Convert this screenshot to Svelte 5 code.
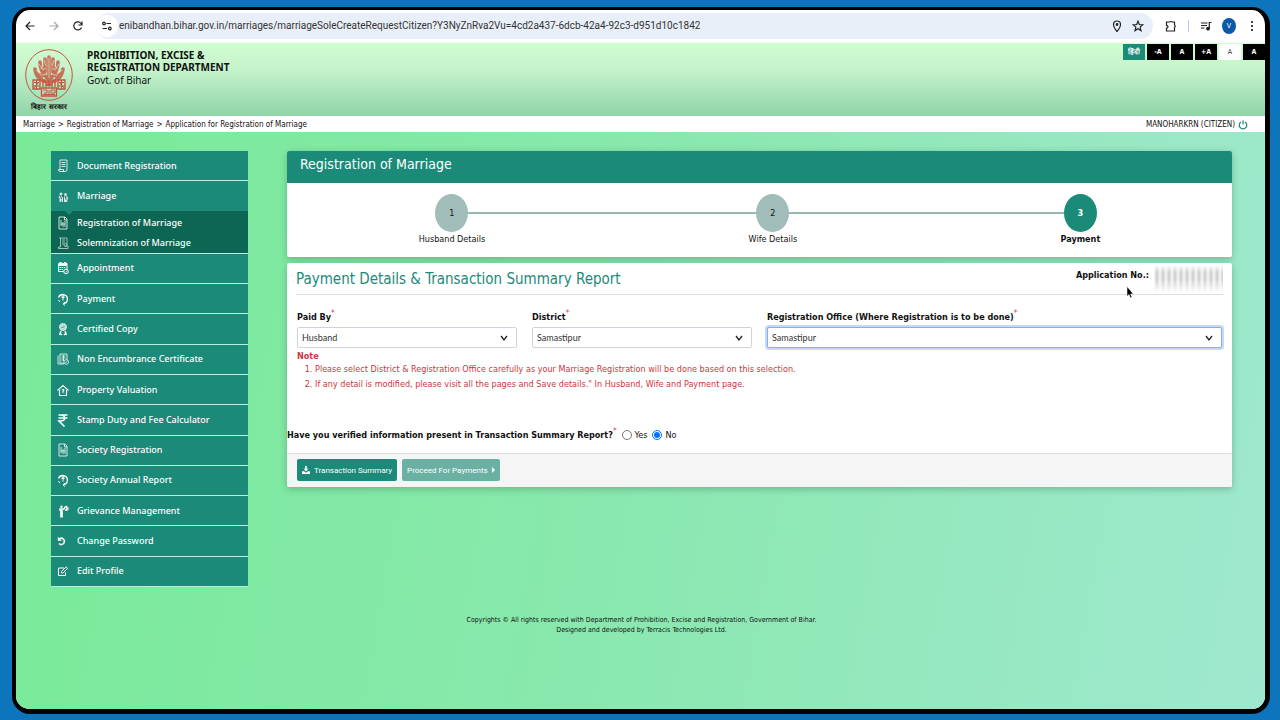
<script lang="ts">
  interface MenuItem {
    label: string;
    icon: string;
    children?: MenuItem[];
  }

  const menu: MenuItem[] = [
    { label: "Document Registration", icon: "doc" },
    {
      label: "Marriage",
      icon: "couple",
      children: [
        { label: "Registration of Marriage", icon: "form" },
        { label: "Solemnization of Marriage", icon: "scroll" }
      ]
    },
    { label: "Appointment", icon: "calendar" },
    { label: "Payment", icon: "pay" },
    { label: "Certified Copy", icon: "badge" },
    { label: "Non Encumbrance Certificate", icon: "papers" },
    { label: "Property Valuation", icon: "house" },
    { label: "Stamp Duty and Fee Calculator", icon: "rupee" },
    { label: "Society Registration", icon: "form" },
    { label: "Society Annual Report", icon: "pay" },
    { label: "Grievance Management", icon: "person" },
    { label: "Change Password", icon: "undo" },
    { label: "Edit Profile", icon: "edit" }
  ];

  const steps = ["Husband Details", "Wife Details", "Payment"];
  const crumbs = ["Marriage", "Registration of Marriage", "Application for Registration of Marriage"];

  let paidBy = "Husband";
  let district = "Samastipur";
  let office = "Samastipur";
  let verified = "no";
  let current = 2;
</script>

{#snippet icon(name: string)}
  <svg class="icon" viewBox="0 0 12 14" fill="none" stroke="currentColor" aria-hidden="true">
    {#if name === "doc"}
      <path opacity=".8" d="M3 1h7v9.500q0 2-2 2H3q-1.500 0-1.500-2h5v2M3 1v9M4.500 3.500h4M4.500 5.500h4M4.500 7.500h4" />
    {:else if name === "couple"}
      <g fill="currentColor" stroke="none" opacity=".8"><circle cx="4" cy="5" r="1.500" /><circle cx="8.500" cy="5.500" r="1.500" /><path d="M2 7h3.500l.5 1v5H4.800v-3l-.8 3H2.500V9L1.500 8.500zM7 7.500h3.500l.8 2.500-1 .5v2.500H7z" /></g>
      <path stroke="#223" stroke-width=".8" d="M3.500 7l1 3M8.500 7.500l.5 3M5.800 6v2" />
    {:else if name === "form"}
      <g opacity=".8"><path d="M2 1h6l2 2v10H2z" /><path d="M4 4v6M6 6v5M4 8h4M8 5v6M7.500 1v3H10" /></g>
    {:else if name === "scroll"}
      <g opacity=".6"><path d="M2 2h8v7M3.500 2v9H1.500v1.500H11V10H8M5 4h3M5 6h3M5 8h2" /><circle cx="8.500" cy="9" r="1.500" /></g>
    {:else if name === "calendar"}
      <path d="M1.500 2.500h8.500v8H1.500z" /><path stroke-width="2" d="M2 4h8M3.500 1v2M8 1v2" /><path stroke-dasharray="1.500 .6" d="M2.500 6.500h6M2.500 8.500h4" /><circle cx="9" cy="10.500" r="2.300" fill="#1b8a78" /><path d="M8 10.500l.8.800 1.400-1.500" stroke-width=".8" />
    {:else if name === "pay"}
      <path stroke-width="1.300" d="M1.500 5.500a4.600 4.600 0 1 1 5 6.200" /><path d="M8 10l-2 1.800L8 13.500M6 3.500v5M4.500 4h3M4.500 5.500h3M1.500 8q.5 1 1.500 2" />
    {:else if name === "badge"}
      <circle cx="6" cy="5" r="3.500" fill="currentColor" fill-opacity=".7" stroke-dasharray="1.400 .5" /><path stroke="#1b8a78" stroke-width=".8" d="M4.500 5l1 1 2-2" /><path stroke-width="1.400" d="M4 9l-1.500 4M3 11l2 2M8 9l1.500 4M9 11l-2 2" />
    {:else if name === "papers"}
      <g opacity=".8"><path d="M3 2h7v6M3 2v9h4M1 3.500v8.500h6M4.500 4h4M4.500 6h4M4.500 8h2M6.500 3v6" /><circle cx="9.200" cy="10" r="2.300" fill="#1b8a78" /><path d="M8 10l.8.800L10.200 9" stroke-width=".8" /></g>
    {:else if name === "house"}
      <path stroke-width="1.100" d="M.5 7.500L6 2.500l5.500 5M2.500 7v5.500h7V7" /><path d="M4.800 6.500h2.500M4.800 8h2.500M6 6.500q2 1.500-.5 2.500l1.500 1.500" stroke-width=".8" />
    {:else if name === "rupee"}
      <path stroke-width="1.600" d="M1.500 2h9M1.500 5h9M3.500 2c5.500 0 5.500 6 0 6H2l5.500 5.500" />
    {:else if name === "person"}
      <path stroke-width="2.600" d="M4.500 6v7.500" /><circle cx="4.500" cy="2.800" r="1.200" fill="currentColor" stroke="none" /><path stroke-width="1.400" d="M3 7V5h4l1-2 1.500-.5L10 6H8" /><path d="M11 3v3" />
    {:else if name === "undo"}
      <path stroke-width="1.500" d="M2.500 4.800A3.100 3.100 0 1 1 2 9.500" /><path fill="currentColor" stroke="none" d="M.8 2.800v4h4z" />
    {:else}
      <path d="M7 4H1.500v7.500H8.500V8.500M4.500 9V7.500L9.200 2.800l1.400 1.400L6 9z" />
    {/if}
  </svg>
{/snippet}

<div class="desktop">
  <div class="browser">
    <div class="toolbar">
      <div class="history">
        <button class="tool" aria-label="Back">
          <svg viewBox="0 0 12 12"><path d="M10.500 6H2M6 2L2 6l4 4" /></svg>
        </button>
        <button class="tool faded" aria-label="Forward">
          <svg viewBox="0 0 12 12"><path d="M1.500 6H10M6 2l4 4-4 4" /></svg>
        </button>
        <button class="tool" aria-label="Reload">
          <svg viewBox="0 0 12 12"><path d="M9.500 7.500A4 4 0 1 1 9 3.500L10 5M10 1.500V5H6.500" /></svg>
        </button>
      </div>
      <div class="address">
        <button class="site-info" aria-label="Site information">
          <svg viewBox="0 0 12 12"><circle cx="3" cy="3.500" r="1.300" /><path d="M5.500 3.500H10M1.500 8.500H6" /><circle cx="8.800" cy="8.500" r="1.300" /></svg>
        </button>
        <input
          class="url"
          aria-label="Address"
          value="enibandhan.bihar.gov.in/marriages/marriageSoleCreateRequestCitizen?Y3NyZnRva2Vu=4cd2a437-6dcb-42a4-92c3-d951d10c1842"
        />
        <button class="tool" aria-label="Location">
          <svg viewBox="0 0 12 12"><path d="M6 11.500C3.500 8.500 2.500 6.500 2.500 4.500a3.500 3.500 0 0 1 7 0c0 2-1 4-3.500 7z" /><circle cx="6" cy="4.500" r=".8" class="solid" /></svg>
        </button>
        <button class="tool" aria-label="Bookmark">
          <svg viewBox="0 0 12 12"><path d="M6 1.200l1.300 3.300 3.500.3-2.700 2.300.9 3.500L6 8.700l-3 1.900.9-3.500L1.200 4.800l3.500-.3z" /></svg>
        </button>
      </div>
      <div class="extras">
        <button class="tool" aria-label="Extensions">
          <svg viewBox="0 0 12 12"><path d="M1.500 2h3.300a1.200 .8 0 0 1 2.200 0h2.500v3a1 1.200 0 0 1 0 2.300v3.700h-8V8q1.500 0 1.500-1.300T1.500 5.300z" /></svg>
        </button>
        <span class="divider"></span>
        <button class="tool" aria-label="Media">
          <svg viewBox="0 0 12 12"><path d="M1 3h6.500M1 5.500h6M1 8h3.500M9.300 8.500V2.500h2.200" /><circle cx="8" cy="8.700" r="1.300" class="solid" /></svg>
        </button>
        <button class="profile">V</button>
        <button class="tool" aria-label="Menu">
          <svg viewBox="0 0 12 12"><circle cx="6" cy="2" r=".5" class="solid" /><circle cx="6" cy="6" r=".5" class="solid" /><circle cx="6" cy="10" r=".5" class="solid" /></svg>
        </button>
      </div>
    </div>

    <header class="banner">
      <div class="logo">
        <svg class="emblem" viewBox="0 0 48 52" fill="none" stroke="#c4543f" aria-hidden="true">
          <ellipse cx="24" cy="26" rx="23.300" ry="25.300" />
          <g stroke-width="3.600" stroke-linecap="round" stroke-opacity=".8">
            <path d="M24 36V8M23 33C16 32 11 28 10 20M25 33c7-1 12-5 13-13M22 29c-4-4-7-9-7-16M26 29c4-4 7-9 7-16M20 23V10M28 23V10M17 27l-6-3M31 27l6-3" />
          </g>
          <g stroke="#f0d9c0" stroke-width=".7">
            <path d="M24 9v20M19 11l2 6M29 11l-2 6M14 15l4 6M34 15l-4 6M11 21l6 6M37 21l-6 6M21 19l-3 2M27 19l3 2M22 25l-5 1M26 25l5 1M16 20l2-4M32 20l-2-4" />
          </g>
          <path d="M18 38v-7l3 2v5M27 38v-5l3-2v7M21 36h6M24 31v6" stroke-width="1.300" />
          <path d="M8 31h7v9H8zM33 31h7v9h-7zM16.500 39h15v8h-15z" stroke-width="1.300" />
          <path d="M9 33.500h5M11.500 31v9M8 37h7M9 39l5-6M34 33.500h5M33 37h7M36.500 31v9M34 33l5 6" />
          <path d="M18 41h4v3h-3M24 41v4M26 41h4v3h-4zM18 45.500h12" />
        </svg>
        <span class="logo-text">बिहार सरकार</span>
      </div>
      <div class="dept">
        <strong>PROHIBITION, EXCISE &amp;<br />REGISTRATION DEPARTMENT</strong>
        <span>Govt. of Bihar</span>
      </div>
      <div class="access">
        <button class="hindi">हिंदी</button>
        <button>-A</button>
        <button>A</button>
        <button>+A</button>
        <button class="light">A</button>
        <button>A</button>
      </div>
    </header>

    <div class="crumb-bar">
      <nav aria-label="Breadcrumb">
        {#each crumbs as crumb, i}
          {#if i > 0}<span>&gt;</span>{/if}
          <a href="#top">{crumb}</a>
        {/each}
      </nav>
      <div class="user">
        MANOHARKRN (CITIZEN)
        <button aria-label="Log out">
          <svg viewBox="0 0 12 12"><path d="M3.500 2.500a4.500 4.500 0 1 0 5 0M6 .5v5" /></svg>
        </button>
      </div>
    </div>

    <div class="page">
      <div class="columns">
        <nav class="sidebar" aria-label="Main menu">
          {#each menu as item}
            <a href="#menu" class="item">{@render icon(item.icon)}{item.label}</a>
            {#if item.children}
              <div class="submenu">
                {#each item.children as child}
                  <a href="#menu">{@render icon(child.icon)}{child.label}</a>
                {/each}
              </div>
            {/if}
          {/each}
        </nav>

        <main>
          <section class="card">
            <h1>Registration of Marriage</h1>
            <ol class="steps">
              {#each steps as step, i}
                <li class:active={i === current}>
                  <button>{i + 1}</button>
                  {step}
                </li>
              {/each}
            </ol>
          </section>

          <section class="card">
            <div class="title-row">
              <h2>Payment Details &amp; Transaction Summary Report</h2>
              <div class="app-no">
                <b>Application No.:</b>
                <span class="masked"></span>
                <svg class="cursor" viewBox="0 0 8 13"><path d="M1 .5v9.800l2-1.800 1.500 3.500 1.500-.7-1.500-3.300h2.800z" /></svg>
              </div>
            </div>

            <div class="fields">
              <div class="field">
                <label for="paid-by">Paid By<sup>*</sup></label>
                <select id="paid-by" bind:value={paidBy}>
                  <option>Husband</option>
                  <option>Wife</option>
                </select>
              </div>
              <div class="field">
                <label for="district">District<sup>*</sup></label>
                <select id="district" bind:value={district}>
                  <option>Samastipur</option>
                </select>
              </div>
              <div class="field wide">
                <label for="office">Registration Office (Where Registration is to be done)<sup>*</sup></label>
                <select id="office" class="focused" bind:value={office}>
                  <option>Samastipur</option>
                </select>
              </div>
            </div>

            <div class="note">
              <b>Note</b>
              <ol>
                <li>Please select District &amp; Registration Office carefully as your Marriage Registration will be done based on this selection.</li>
                <li>If any detail is modified, please visit all the pages and Save details." In Husband, Wife and Payment page.</li>
              </ol>
            </div>

            <div class="verify" role="radiogroup" aria-labelledby="verify-label">
              <b id="verify-label">Have you verified information present in Transaction Summary Report?<sup>*</sup></b>
              <label><input type="radio" name="verified" value="yes" bind:group={verified} />Yes</label>
              <label><input type="radio" name="verified" value="no" bind:group={verified} />No</label>
            </div>

            <div class="actions">
              <button>
                <svg viewBox="0 0 10 10"><path d="M4 0h2v3.500h2L5 7 2 3.500h2zM0 6.500h2.500L5 8.500l2.500-2H10V10H0z" /></svg>
                Transaction Summary
              </button>
              <button disabled>
                Proceed For Payments
                <svg class="caret" viewBox="0 0 4 8"><path d="M0 0l4 4-4 4z" /></svg>
              </button>
            </div>
          </section>
        </main>
      </div>

      <footer>
        Copyrights © All rights reserved with Department of Prohibition, Excise and Registration, Government of Bihar.<br />
        Designed and developed by Terracis Technologies Ltd.
      </footer>
    </div>
  </div>
</div>

<style>
  .desktop {
    box-sizing: border-box;
    display: flex;
    min-height: 100vh;
    padding: 7px 10px 6px 12px;
    background: #0d75bb;
    font-family: "DejaVu Sans Condensed", "DejaVu Sans", sans-serif;
    font-size: 10px;
    line-height: 12px;
    color: #111;
  }
  .browser {
    flex: 1;
    display: flex;
    flex-direction: column;
    overflow: hidden;
    border: solid #000;
    border-width: 3px 5px 5px 4px;
    border-radius: 18px;
    background: #fff;
  }
  button {
    padding: 0;
    border: 0;
    background: none;
    font: inherit;
    color: inherit;
  }
  a {
    color: inherit;
    text-decoration: none;
  }
  h1, h2, ol {
    margin: 0;
    padding: 0;
    font-weight: normal;
  }
  sup {
    font-size: 8px;
    line-height: 0;
    color: #dc3545;
    font-weight: normal;
  }

  /* browser toolbar */
  .toolbar {
    display: flex;
    align-items: center;
    gap: 12px;
    height: 31px;
    padding: 0 7px 0 8px;
    border-bottom: 2px solid #fafcfa;
  }
  .history {
    display: flex;
    gap: 12px;
  }
  .extras {
    display: flex;
    align-items: center;
    gap: 10px;
  }
  .tool {
    display: flex;
  }
  .tool svg,
  .site-info svg {
    width: 12px;
    height: 12px;
    fill: none;
    stroke: #222;
    stroke-width: 1.2;
  }
  .tool .solid {
    fill: #222;
  }
  .faded {
    opacity: 0.4;
  }
  .address {
    flex: 1;
    display: flex;
    align-items: center;
    gap: 9px;
    height: 26px;
    padding: 0 9px 0 0;
    border-radius: 13px;
    background: #e8eff8;
  }
  .site-info {
    display: flex;
    margin-right: -8px;
    padding: 5px;
    border-radius: 50%;
    background: #fff;
  }
  .url {
    flex: 1;
    padding: 0;
    border: 0;
    background: none;
    font: 10px/14px Roboto, sans-serif;
    color: #333;
  }
  .divider {
    width: 1px;
    height: 12px;
    margin: 0 1px;
    background: #b3c8f3;
  }
  .profile {
    width: 14px;
    height: 16px;
    border-radius: 50%;
    background: #0b57a8;
    color: #fff;
    font-size: 7px;
  }

  /* department banner */
  .banner {
    display: flex;
    align-items: flex-start;
    height: 73px;
    padding-left: 9px;
    background: linear-gradient(#d0fdd0, #c6f3cc 35%, #8fd4a8);
  }
  .logo {
    width: 48px;
    margin: 6px 14px 0 0;
    text-align: center;
  }
  .emblem {
    display: block;
    width: 48px;
    height: 52px;
  }
  .logo-text {
    display: block;
    font-size: 7px;
    line-height: 12px;
    font-weight: bold;
    white-space: nowrap;
  }
  .dept {
    flex: 1;
    padding-top: 6px;
    font-family: "Noto Sans", sans-serif;
  }
  .dept strong,
  .dept span {
    display: block;
  }
  .dept span {
    margin-top: 1px;
  }
  .access {
    display: flex;
    gap: 2px;
    padding-top: 1px;
  }
  .access button {
    width: 22px;
    height: 16px;
    background: #000;
    color: #fff;
    font-size: 7px;
    font-weight: bold;
  }
  .access .hindi {
    background: #1b8a78;
  }
  .access .light {
    background: #fff;
    color: #333;
    font-weight: normal;
  }

  .crumb-bar {
    display: flex;
    justify-content: space-between;
    align-items: center;
    padding: 3px 17px 1px 7px;
    background: #fff;
    font-size: 8px;
  }
  .crumb-bar nav {
    display: flex;
    gap: 3px;
  }
  .user {
    display: flex;
    align-items: center;
    gap: 3px;
  }
  .user button {
    display: flex;
  }
  .user svg {
    width: 10px;
    height: 10px;
    fill: none;
    stroke: #1b8a78;
    stroke-width: 1.5;
  }

  /* page body */
  .page {
    flex: 1;
    padding: 19px 33px 20px 35px;
    background: linear-gradient(100deg, #78ea98, #88e8ac 45%, #9fe8cf);
  }
  .columns {
    display: flex;
    align-items: flex-start;
    gap: 39px;
  }
  .sidebar {
    display: flex;
    flex-direction: column;
    width: 197px;
    min-height: 436px;
    color: #fff;
    font-family: "Noto Sans", sans-serif;
    font-size: 9px;
    font-weight: 500;
  }
  .item {
    flex: 1;
    display: flex;
    align-items: center;
    min-height: 29px;
    background: #1b8a78;
    border-bottom: 1px solid #b5f0dc;
  }
  .icon {
    width: 12px;
    height: 14px;
    margin: 0 8px 0 6px;
  }
  .item:has(+ .submenu) {
    border-bottom: 0;
  }
  .submenu {
    position: relative;
    padding: 2px 0 0;
    background: #0d6553;
    border-bottom: 1px solid #b5f0dc;
  }
  .submenu::before {
    content: "";
    position: absolute;
    top: 0;
    left: 14px;
    border: 4px solid transparent;
    border-top-color: #1b8a78;
    border-bottom: 0;
  }
  .submenu a {
    display: flex;
    align-items: center;
    height: 20px;
  }

  main {
    flex: 1;
    min-width: 0;
  }
  .card {
    overflow: hidden;
    margin-bottom: 6px;
    border-radius: 2px;
    background: #fff;
    box-shadow: 0 2px 7px rgba(50, 110, 80, 0.4);
  }
  h1 {
    padding: 4px 13px 10px;
    background: #1b8a78;
    color: #fff;
    font-size: 14px;
    line-height: 18px;
  }
  .steps {
    position: relative;
    display: flex;
    justify-content: space-around;
    padding: 11px 0 12px;
    list-style: none;
  }
  .steps::before {
    content: "";
    position: absolute;
    top: 29px;
    left: 18%;
    right: 17%;
    height: 2px;
    background: #93bab5;
  }
  .steps li {
    position: relative;
    display: flex;
    flex-direction: column;
    align-items: center;
    gap: 1px;
    font-size: 9px;
  }
  .steps button {
    width: 33px;
    height: 38px;
    border-radius: 50%;
    background: #a0bdb9;
  }
  .steps .active {
    font-weight: bold;
  }
  .steps .active button {
    background: #1b8a78;
    color: #fff;
  }

  .title-row {
    display: flex;
    justify-content: space-between;
    margin: 0 9px;
    border-bottom: 1px solid #ddd;
  }
  h2 {
    padding: 6px 0 5px;
    color: #1b8a78;
    font-size: 15px;
    line-height: 20px;
  }
  .app-no {
    position: relative;
    display: flex;
    gap: 5px;
    padding-top: 6px;
    font-size: 9px;
  }
  .masked {
    width: 69px;
    height: 28px;
    margin-top: -4px;
    background:
      linear-gradient(#fff, transparent 25%, transparent 50%, #fff),
      repeating-linear-gradient(90deg, #f6f6f6, #ccc 3px, #f6f6f6 6px);
  }
  .cursor {
    position: absolute;
    top: 23px;
    left: 50px;
    width: 8px;
    height: 13px;
    stroke: #fff;
    stroke-width: 0.5;
  }
  .fields {
    display: grid;
    grid-template-columns: repeat(4, 1fr);
    gap: 15px;
    padding: 16px 10px 0;
  }
  .field label {
    display: block;
    margin-bottom: 4px;
    font-size: 9px;
    font-weight: bold;
  }
  .wide {
    grid-column: span 2;
  }
  select {
    appearance: none;
    display: block;
    width: 100%;
    height: 21px;
    padding: 0 4px;
    border: 1px solid #ced4da;
    border-radius: 2px;
    background: #fff
      url("data:image/svg+xml,%3Csvg xmlns='http://www.w3.org/2000/svg' viewBox='0 0 8 8'%3E%3Cpath d='M1 2l3 4 3-4' fill='none' stroke='%23222' stroke-width='1.300'/%3E%3C/svg%3E")
      no-repeat right 8px center / 8px 8px;
    font: 9px Lato, sans-serif;
    color: #333;
  }
  .focused {
    border-color: #86aef5;
    box-shadow: 0 0 0 2px #c5d9fb;
  }
  .note {
    padding: 2px 10px 0;
    color: #cf3540;
    font-size: 9px;
  }
  .note ol {
    padding-left: 18px;
  }
  .note li {
    line-height: 15px;
  }
  .verify {
    display: flex;
    align-items: center;
    gap: 5px;
    margin-top: 37px;
    font-size: 9px;
  }
  .verify label {
    display: flex;
    align-items: center;
    gap: 3px;
  }
  .verify input {
    width: 10px;
    height: 10px;
    margin: 0;
  }
  .actions {
    display: flex;
    gap: 5px;
    margin-top: 12px;
    padding: 5px 10px 6px;
    border-top: 1px solid #ddd;
    background: #f5f5f5;
  }
  .actions button {
    display: flex;
    align-items: center;
    gap: 4px;
    height: 22px;
    padding: 0 5px;
    border-radius: 2px;
    background: #1b8a78;
    color: #fff;
    font: 8px Roboto, sans-serif;
  }
  .actions button:disabled {
    background: #6ab0a3;
  }
  .actions svg {
    width: 8px;
    height: 8px;
    fill: #fff;
  }
  .actions .caret {
    width: 3px;
    height: 6px;
  }
  footer {
    margin-top: 28px;
    text-align: center;
    font-size: 7px;
    line-height: 10px;
  }
</style>
